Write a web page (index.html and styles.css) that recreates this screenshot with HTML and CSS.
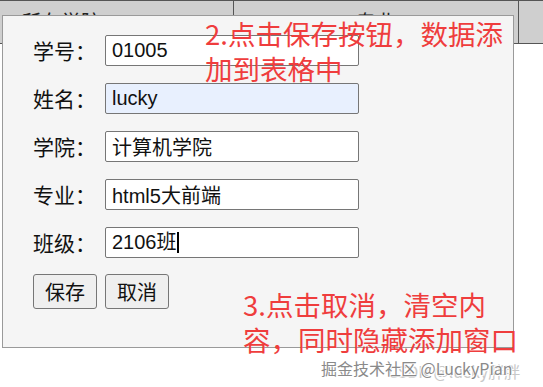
FILE: index.html
```html
<!DOCTYPE html>
<html lang="zh">
<head>
<meta charset="utf-8">
<link rel="stylesheet" href="styles.css">
</head>
<body>
<div class="table">
  <div class="thead">
    <div class="th th-left">所在学院</div>
    <div class="th">专业</div>
    <div class="th"></div>
  </div>
</div>

<div class="dialog">
  <div class="row"><label class="lbl">学号：</label><input class="inp" value="01005"></div>
  <div class="row"><label class="lbl">姓名：</label><input class="inp filled" value="lucky"></div>
  <div class="row"><label class="lbl">学院：</label><input class="inp" value="计算机学院"></div>
  <div class="row"><label class="lbl">专业：</label><input class="inp" value="html5大前端"></div>
  <div class="row"><label class="lbl">班级：</label><div class="inp fake">2106班<span class="caret"></span></div></div>
  <div class="btns"><button class="btn">保存</button><button class="btn">取消</button></div>
</div>

<div class="note note-1">2.点击保存按钮，数据添<br>加到表格中</div>
<div class="note note-2">3.点击取消，清空内<br>容，同时隐藏添加窗口</div>

<div class="wm wm-back">CSDN @lucky胖胖</div>
<div class="wm wm-front">掘金技术社区 @LuckyPian</div>
</body>
</html>
```

FILE: styles.css
```css
html, body {
  margin: 0;
  padding: 0;
  width: 543px;
  height: 387px;
  overflow: hidden;
  background: #fff;
  font-family: "Noto Sans CJK SC", "Liberation Sans", sans-serif;
}

.table {
  width: 560px;
}

.thead {
  display: grid;
  grid-template-columns: 234px 285px 1fr;
  height: 42px;
  background: #cfcfcf;
  border-top: 1px solid #555;
  border-bottom: 1px solid #555;
}

.th {
  border-right: 1px solid #555;
  font-size: 20px;
  line-height: 42px;
  text-align: center;
  color: #222;
}

.th-left {
  text-align: left;
  padding-left: 21px;
}

.dialog {
  position: absolute;
  left: 2px;
  top: 15px;
  width: 510px;
  height: 331px;
  box-sizing: content-box;
  border: 1px solid #9a9a9a;
  background: #f5f5f5;
  padding: 0;
  display: flex;
  flex-direction: column;
  gap: 17px;
  padding-top: 19px;
  padding-left: 30px;
  box-sizing: border-box;
  width: 512px;
  height: 333px;
}

.row {
  display: flex;
  align-items: center;
  height: 31px;
}

.lbl {
  width: 72px;
  font-size: 21px;
  color: #111;
  line-height: 31px;
}

.inp {
  box-sizing: border-box;
  width: 254px;
  height: 31px;
  border: 1px solid #767676;
  border-radius: 2px;
  background: #fff;
  padding: 0 6px;
  font-family: "Liberation Sans", "Noto Sans CJK SC", sans-serif;
  font-size: 20px;
  color: #111;
  outline: none;
}

.filled {
  background: #e8f0fe;
}

.fake {
  display: flex;
  align-items: center;
  line-height: 29px;
}

.caret {
  display: inline-block;
  width: 2px;
  height: 21px;
  background: #000;
  margin-left: 0;
}

.btns {
  display: flex;
  gap: 8px;
  margin-top: -1px;
}

.btn {
  box-sizing: border-box;
  width: 64px;
  height: 35px;
  font-family: "Noto Sans CJK SC", sans-serif;
  font-size: 20px;
  color: #111;
  background: #efefef;
  border: 1px solid #767676;
  border-radius: 3px;
  padding: 0;
}

.note {
  position: absolute;
  color: #ef3d3d;
  font-size: 27.5px;
  line-height: 35px;
  white-space: nowrap;
}

.note-1 {
  left: 205px;
  top: 16px;
}

.note-2 {
  left: 243px;
  top: 287px;
}

.wm {
  position: absolute;
  white-space: nowrap;
  font-size: 16px;
}

.wm-back {
  left: 388px;
  top: 359px;
  color: #c8c8c8;
}

.wm-front {
  left: 321px;
  top: 356px;
  color: #8a8a8a;
  text-shadow: 0 0 1px #fff, 1px 1px 0 #fff, -1px -1px 0 #fff;
}
```
